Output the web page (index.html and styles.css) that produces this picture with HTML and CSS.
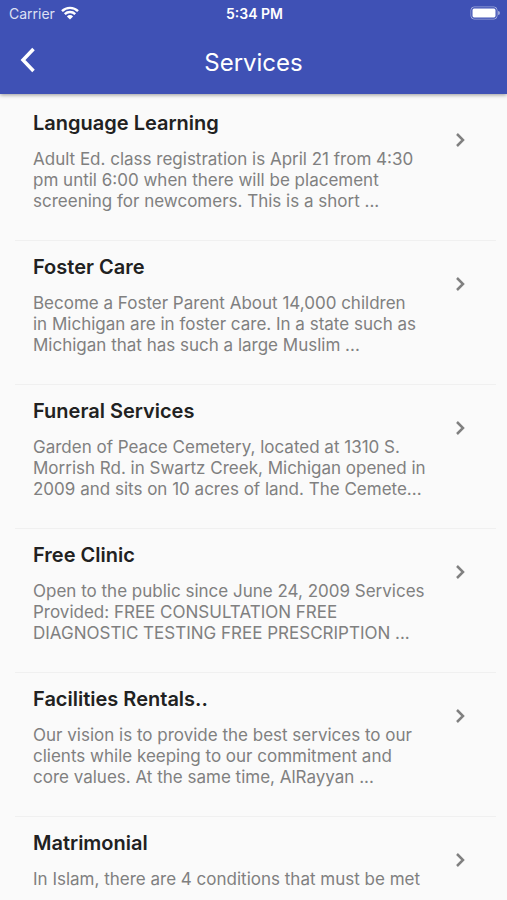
FILE: index.html
```html
<!DOCTYPE html>
<html lang="en">
  <head>
    <meta charset="UTF-8" />
    <meta name="viewport" content="width=device-width, initial-scale=1.0" />
    <title>Services</title>
    <link rel="stylesheet" href="styles.css">
  </head>
  <body>
    <header class="app-header">
      <div class="status-bar">
        <div class="carrier">
          <span>Carrier</span>
          <svg class="wifi" viewBox="0 0 18 14" aria-hidden="true">
            <path d="M1 5.2a11.3 11.3 0 0 1 16 0M3.8 8.1a7.4 7.4 0 0 1 10.4 0" />
            <path class="wifi-dot" d="M9 13.5 5.9 10.4a4.4 4.4 0 0 1 6.2 0z" />
          </svg>
        </div>
        <span class="time">5:34 PM</span>
        <svg class="battery" viewBox="0 0 31 14" aria-hidden="true">
          <rect class="battery-case" x="2" y="1" width="26" height="12" rx="3" />
          <rect class="battery-level" x="3" y="2" width="24" height="10" rx="2" />
          <path class="battery-cap" d="M29 5v4a2 2 0 0 0 0-4z" />
        </svg>
      </div>
      <div class="nav-bar">
        <button type="button" class="back-button" aria-label="Back">
          <svg viewBox="0 0 16 26" aria-hidden="true">
            <path d="M13.5 2 3 13l10.5 11" />
          </svg>
        </button>
        <h1>Services</h1>
      </div>
    </header>

    <main class="service-list">
      <a href="#" class="service">
        <div class="service-text">
          <h2>Language Learning</h2>
          <p>Adult Ed. class registration is April 21 from 4:30 pm until 6:00 when there will be placement screening for newcomers. This is a short ...</p>
        </div>
        <svg class="chevron" viewBox="0 0 10 16" aria-hidden="true"><path d="M2 2l6 6-6 6" /></svg>
      </a>
      <a href="#" class="service">
        <div class="service-text">
          <h2>Foster Care</h2>
          <p>Become a Foster Parent About 14,000 children<br>in Michigan are in foster care. In a state such as Michigan that has such a large Muslim ...</p>
        </div>
        <svg class="chevron" viewBox="0 0 10 16" aria-hidden="true"><path d="M2 2l6 6-6 6" /></svg>
      </a>
      <a href="#" class="service">
        <div class="service-text">
          <h2>Funeral Services</h2>
          <p>Garden of Peace Cemetery, located at 1310 S. Morrish Rd. in Swartz Creek, Michigan opened in 2009 and sits on 10 acres of land. The Cemete...</p>
        </div>
        <svg class="chevron" viewBox="0 0 10 16" aria-hidden="true"><path d="M2 2l6 6-6 6" /></svg>
      </a>
      <a href="#" class="service">
        <div class="service-text">
          <h2>Free Clinic</h2>
          <p>Open to the public since June 24, 2009 Services Provided: FREE CONSULTATION FREE DIAGNOSTIC TESTING FREE PRESCRIPTION ...</p>
        </div>
        <svg class="chevron" viewBox="0 0 10 16" aria-hidden="true"><path d="M2 2l6 6-6 6" /></svg>
      </a>
      <a href="#" class="service">
        <div class="service-text">
          <h2>Facilities Rentals..</h2>
          <p>Our vision is to provide the best services to our clients while keeping to our commitment and core values. At the same time, AlRayyan ...</p>
        </div>
        <svg class="chevron" viewBox="0 0 10 16" aria-hidden="true"><path d="M2 2l6 6-6 6" /></svg>
      </a>
      <a href="#" class="service">
        <div class="service-text">
          <h2>Matrimonial</h2>
          <p>In Islam, there are 4 conditions that must be met</p>
        </div>
        <svg class="chevron" viewBox="0 0 10 16" aria-hidden="true"><path d="M2 2l6 6-6 6" /></svg>
      </a>
    </main>
  </body>
</html>
```
FILE: styles.css
```css
* {
  box-sizing: border-box;
}

body {
  margin: 0;
  font-family: Inter, "Liberation Sans", sans-serif;
  background: #fafafa;
}

svg {
  display: block;
  fill: none;
  stroke: #fff;
}

.app-header {
  position: sticky;
  top: 0;
  background: #3f51b5;
  color: #fff;
  box-shadow: 0 1px 4px rgba(0, 0, 0, 0.4);
}

/* Status bar */
.status-bar {
  display: grid;
  grid-template-columns: 1fr auto 1fr;
  align-items: center;
  height: 26px;
  padding: 0 7px 0 9px;
  font-size: 14px;
}

.carrier {
  display: flex;
  align-items: center;
  gap: 6px;
  color: #dde0f3;
}

.wifi {
  width: 18px;
  height: 14px;
  stroke-width: 2.4;
}

.wifi-dot {
  fill: #fff;
  stroke: none;
}

.time {
  font-weight: 600;
}

.battery {
  width: 31px;
  height: 14px;
  justify-self: end;
}

.battery-case {
  stroke: #9fa8da;
}

.battery-level {
  fill: #fff;
  stroke: #3f51b5;
}

.battery-cap {
  fill: #9fa8da;
  stroke: none;
}

/* Title bar */
.nav-bar {
  display: grid;
  grid-template-columns: 56px 1fr 56px;
  align-items: center;
  height: 68px;
  padding-top: 4px;
}

.back-button {
  padding: 0 20px 4px;
  border: none;
  background: none;
  cursor: pointer;
}

.back-button svg {
  width: 16px;
  height: 26px;
  stroke-width: 3.5;
}

.nav-bar h1 {
  margin: 0;
  font-size: 24px;
  font-weight: 400;
  text-align: center;
}

/* List */
.service-list {
  padding: 3px 11px 0 15px;
}

.service {
  display: flex;
  justify-content: space-between;
  min-height: 144px;
  padding: 12px 31px 28px 18px;
  border-bottom: 1px solid #f0f0f0;
  color: #808080;
  text-decoration: none;
}

.service-text {
  flex: 1;
  max-width: 396px;
}

.service h2 {
  margin: 0 0 12px;
  font-size: 20px;
  line-height: 28px;
  font-weight: 600;
  color: #212121;
}

.service p {
  margin: 0;
  font-size: 17px;
  line-height: 21px;
}

.chevron {
  width: 10px;
  height: 16px;
  margin-top: 23px;
  stroke: #808080;
  stroke-width: 2.5;
}
```
